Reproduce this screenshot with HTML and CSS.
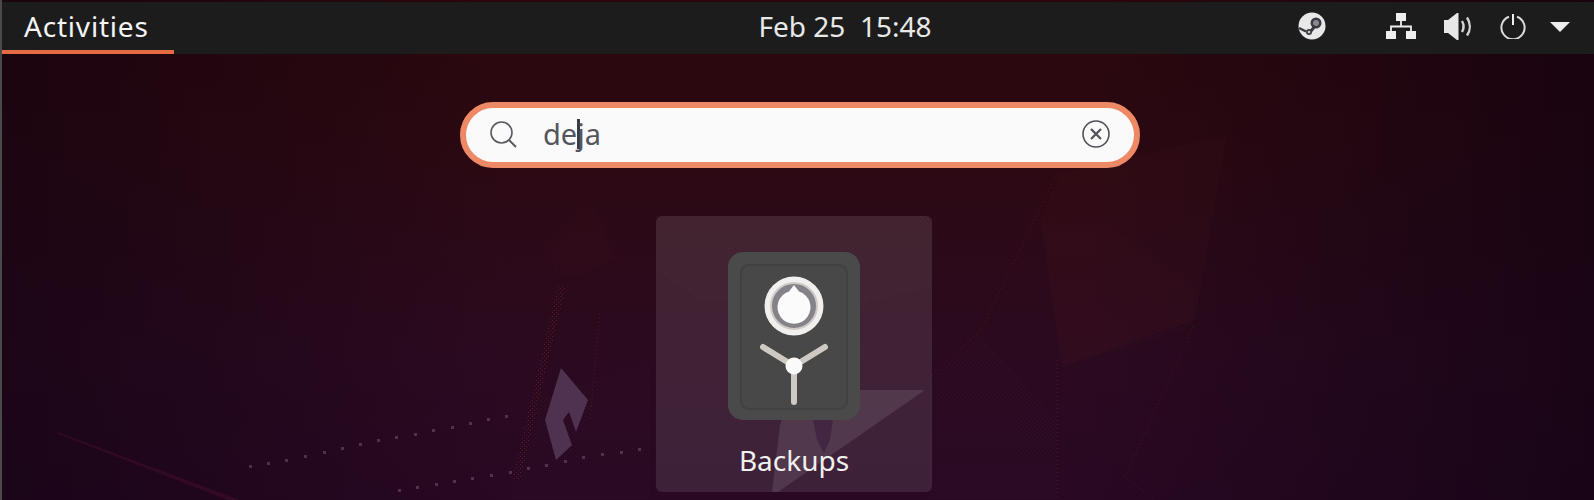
FILE: index.html
```html
<!DOCTYPE html>
<html lang="en">
<head>
<meta charset="utf-8">
<title>Activities search</title>
<link rel="stylesheet" href="styles.css">
</head>
<body>
<div class="desktop">
  <svg class="wallpaper" width="1594" height="500" viewBox="0 0 1594 500" aria-hidden="true">
    <defs>
      <pattern id="dots" width="4" height="4" patternUnits="userSpaceOnUse"><rect width="1" height="1" fill="#fff"/><rect x="2" y="2" width="1" height="1" fill="#fff"/></pattern>
      <pattern id="dotsOrange" width="4" height="4" patternUnits="userSpaceOnUse"><rect width="1" height="1" fill="#e95420"/><rect x="2" y="2" width="1" height="1" fill="#e95420"/></pattern>
    </defs>
    <polygon points="1060,173 1227,135 1195,320 1062,367 1040,217" fill="#5a1a20" opacity=".1"/>
    <polygon points="1040,217 1110,225 1195,290 1190,328 1062,367" fill="url(#dotsOrange)" opacity=".08"/>
    <polygon points="548,245 590,203 618,260 570,278 555,272" fill="url(#dotsOrange)" opacity=".09"/>
    <polygon points="558,285 566,285 520,480 512,480" fill="url(#dotsOrange)" opacity=".24"/>
    <polygon points="930,380 980,335 1056,420 1056,500 930,500" fill="url(#dots)" opacity=".05"/>
    <polygon points="540,400 510,500 650,500 650,360" fill="url(#dots)" opacity=".04"/>
    <polygon points="561,368 588,400 576,432 569,412 563,420 572,445 556,460 545,420" fill="#553a58" opacity=".85"/>
    <polygon points="56,433 60,433 240,500 228,500" fill="#4c1030" opacity=".45"/>
    <polygon points="780,425 792,390 925,390 778,492 772,492" fill="#fff" opacity=".1"/>
    <polygon points="813,420 833,420 830,440 824,453 817,440" fill="#2a0a2a" opacity=".75"/>
    <polygon points="656,216 932,216 932,285 860,305 700,300 656,270" fill="url(#dots)" opacity=".05"/>
    <path d="M1193 327L1125 477L1155 500M1057 360V500M1057 173L981 330L930 377M600 310L590 420" stroke="#e95420" stroke-width="1.500" stroke-dasharray="1 3" opacity=".14" fill="none"/>
    <g fill="#7a5a7c" opacity=".5">
      <rect x="249" y="465" width="3" height="3"/><rect x="267" y="462" width="3" height="3"/><rect x="285" y="459" width="3" height="3"/><rect x="304" y="455" width="3" height="3"/><rect x="323" y="451" width="3" height="3"/><rect x="341" y="447" width="3" height="3"/><rect x="359" y="443" width="3" height="3"/><rect x="377" y="439" width="3" height="3"/><rect x="395" y="436" width="3" height="3"/><rect x="414" y="433" width="3" height="3"/><rect x="432" y="429" width="3" height="3"/><rect x="451" y="426" width="3" height="3"/><rect x="469" y="422" width="3" height="3"/><rect x="487" y="418" width="3" height="3"/><rect x="505" y="415" width="3" height="3"/>
      <rect x="398" y="489" width="3" height="3"/><rect x="416" y="486" width="3" height="3"/><rect x="435" y="483" width="3" height="3"/><rect x="453" y="480" width="3" height="3"/><rect x="471" y="477" width="3" height="3"/><rect x="490" y="474" width="3" height="3"/><rect x="509" y="471" width="3" height="3"/><rect x="527" y="467" width="3" height="3"/><rect x="545" y="464" width="3" height="3"/><rect x="564" y="460" width="3" height="3"/><rect x="582" y="456" width="3" height="3"/><rect x="601" y="453" width="3" height="3"/><rect x="620" y="451" width="3" height="3"/><rect x="638" y="448" width="3" height="3"/>
    </g>
  </svg>

  <header class="topbar">
    <div class="activities">Activities</div>
    <div class="clock">Feb 25&nbsp;&nbsp;15:48</div>
    <div class="tray">
      <svg class="tray-steam" width="28" height="28" viewBox="0 0 28 28" aria-hidden="true">
        <circle cx="14" cy="14" r="13.500" fill="#e8e8e8"/>
        <circle cx="18" cy="11" r="5.500" fill="#3a3840"/>
        <circle cx="18" cy="11" r="3" fill="#8b8790"/>
        <path d="M13 19l4-5" stroke="#3a3840" stroke-width="3" fill="none"/>
        <path d="M1 16l7 3.500" stroke="#3a3840" stroke-width="2.500" fill="none"/>
        <circle cx="11" cy="20" r="3" fill="#3a3840"/>
        <circle cx="11" cy="20" r="1.300" fill="#c8c8c8"/>
      </svg>
      <svg class="tray-net" width="30" height="26" viewBox="0 0 30 26" aria-hidden="true">
        <rect x="10" y="0" width="10" height="8" fill="#eeeeee"/>
        <rect x="0" y="18" width="10" height="8" fill="#eeeeee"/>
        <rect x="20" y="18" width="10" height="8" fill="#eeeeee"/>
        <path d="M15 8v5M5 18v-4.500h20V18" stroke="#eeeeee" stroke-width="1.800" fill="none"/>
      </svg>
      <svg class="tray-vol" width="28" height="27" viewBox="0 0 28 27" aria-hidden="true">
        <path d="M0 7h4l9-7h1.500v27H13l-9-7H0z" fill="#e8e8e8"/>
        <path d="M18 8c2 3.500 2 7.500 0 11" stroke="#d4d4d4" stroke-width="2.400" fill="none"/>
        <path d="M23 4.500c3.700 5.500 3.700 12.500 0 18" stroke="#d4d4d4" stroke-width="2.400" fill="none"/>
      </svg>
      <svg class="tray-power" width="26" height="25" viewBox="0 0 26 25" aria-hidden="true">
        <path d="M9 2.700a11.600 11.600 0 1 0 8 0" stroke="#dcdcdc" stroke-width="2" fill="none"/>
        <path d="M13 0v11" stroke="#eeeeee" stroke-width="2" fill="none"/>
      </svg>
      <svg class="tray-caret" width="20" height="10" viewBox="0 0 20 10" aria-hidden="true">
        <path d="M0 0h20L10 10z" fill="#eeeeee"/>
      </svg>
    </div>
  </header>

  <main class="overview">
    <div class="search">
      <svg class="search-icon" width="27" height="27" viewBox="0 0 27 27" aria-hidden="true">
        <circle cx="11.500" cy="11.500" r="10.500" stroke="#5a5a62" stroke-width="1.600" fill="none"/>
        <path d="M19 19l7 7" stroke="#5a5a62" stroke-width="2" fill="none"/>
      </svg>
      <span class="search-text"><span>de</span><span class="caret"></span><span>ja</span></span>
      <svg class="clear-icon" width="28" height="28" viewBox="0 0 28 28" aria-hidden="true">
        <circle cx="14" cy="14" r="13" stroke="#505058" stroke-width="1.600" fill="none"/>
        <path d="M9 9l10 10M19 9L9 19" stroke="#505058" stroke-width="2.200" fill="none"/>
      </svg>
    </div>
    <div class="result">
      <svg class="backup-icon" width="132" height="168" viewBox="0 0 132 168" aria-hidden="true">
        <rect x="0" y="0" width="132" height="168" rx="15" fill="#4a4a4a"/>
        <rect x="13" y="13" width="106" height="144" rx="8" fill="#484848" stroke="#424042" stroke-width="2"/>
        <circle cx="66" cy="54" r="29.500" fill="#f2f0ee"/>
        <circle cx="66" cy="54" r="23" fill="#85838a" stroke="#cfcac5" stroke-width="2"/>
        <path d="M66 33l5 6.500a16.500 16.500 0 1 1-10 0z" fill="#fbfbfb"/>
        <path d="M35 95l31 19 31-19M66 114v36" stroke="#cfc9c4" stroke-width="6" stroke-linecap="round" fill="none"/>
        <circle cx="66" cy="114" r="8.500" fill="#fafafa"/>
      </svg>
      <div class="result-label">Backups</div>
    </div>
  </main>
</div>
</body>
</html>
```

FILE: styles.css
```css
* {
  box-sizing: border-box;
}

html, body {
  margin: 0;
  padding: 0;
  height: 500px;
  overflow: hidden;
}

.desktop {
  position: relative;
  width: 1594px;
  height: 500px;
  padding-top: 2px;
  overflow: hidden;
  border-left: 2px solid #4a4a4a;
  font-family: "Noto Sans", "Open Sans", sans-serif;
  background:
    linear-gradient(90deg, rgba(16, 2, 16, .55) 0, rgba(16, 2, 16, 0) 32%, rgba(16, 2, 16, 0) 68%, rgba(16, 2, 16, .65) 100%),
    linear-gradient(180deg, #2a070c 0, #2c0912 30%, #2b0a20 72%, #280823 100%);
}

.wallpaper {
  position: absolute;
  left: -2px;
  top: 0;
}

.topbar {
  position: relative;
  display: grid;
  grid-template-columns: 1fr auto 1fr;
  height: 52px;
  background: #1c1c1c;
  color: #f2f2f2;
}

.activities {
  justify-self: start;
  width: 174px;
  height: 52px;
  margin-left: -2px;
  padding: 8px 0 0 24px;
  border-bottom: 4px solid #e56c42;
  font-size: 28px;
  line-height: 32px;
  letter-spacing: .8px;
  color: #f4f4f4;
}

.clock {
  margin-left: 94px;
  padding-top: 8px;
  font-size: 28px;
  line-height: 32px;
  white-space: pre;
  color: #e8e8e8;
}

.tray {
  justify-self: end;
  display: flex;
  align-items: center;
  height: 52px;
  padding: 0 24px 4px 0;
}

.tray-steam {
  margin-right: 60px;
}

.tray-net {
  margin-right: 28px;
}

.tray-vol {
  margin-right: 28px;
}

.tray-power {
  margin-right: 24px;
}

.tray-caret {
  margin-top: 2px;
}

.overview {
  position: relative;
  display: flex;
  flex-direction: column;
  align-items: center;
  padding: 48px 0 0 0;
}

.search {
  display: flex;
  align-items: center;
  width: 680px;
  height: 66px;
  margin-left: 4px;
  padding: 0 24px 2px 24px;
  border: 6px solid #ee8966;
  border-radius: 33px;
  background: #fafafa;
}

.search-icon {
  flex: none;
}

.search-text {
  flex: 1;
  display: flex;
  align-items: center;
  padding-left: 26px;
  font-size: 29px;
  line-height: 36px;
  color: #55555c;
}

.caret {
  flex: none;
  width: 3px;
  height: 30px;
  margin-right: -3px;
  background: #3a3a40;
}

.clear-icon {
  flex: none;
}

.result {
  display: flex;
  flex-direction: column;
  align-items: center;
  width: 276px;
  height: 276px;
  margin: 48px 8px 0 0;
  padding-top: 36px;
  border-radius: 6px;
  background: rgba(255, 255, 255, .1);
}

.backup-icon {
  flex: none;
}

.result-label {
  margin-top: 23px;
  font-size: 28px;
  line-height: 34px;
  color: #f0f0f0;
}
```
